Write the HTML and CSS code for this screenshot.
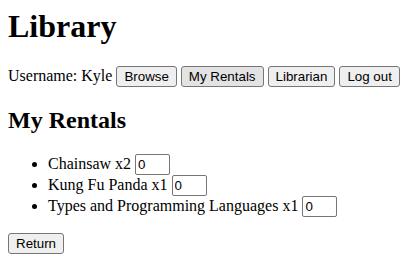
FILE: index.html
```html
<!DOCTYPE html>
<html lang="en">
<head>
    <meta charset="UTF-8">
    <title>Library</title>
    <link rel="stylesheet" href="styles.css">
</head>
<body>
    <h1>Library</h1>
    <div class="nav">
        Username: Kyle
        <button>Browse</button>
        <button class="current">My Rentals</button>
        <button>Librarian</button>
        <button>Log out</button>
    </div>

    <h2>My Rentals</h2>
    <ul class="rentals">
        <li>Chainsaw x2 <input type="number" class="qty" value="0" min="0"></li>
        <li>Kung Fu Panda x1 <input type="number" class="qty" value="0" min="0"></li>
        <li>Types and Programming Languages x1 <input type="number" class="qty" value="0" min="0"></li>
    </ul>
    <button>Return</button>
</body>
</html>
```

FILE: styles.css
```css
body {
    font-family: "Liberation Serif", "Times New Roman", serif;
    font-size: 16px;
    color: #000;
    background: #fff;
    margin: 8px;
}
h1 {
    margin-top: 0;
}
button, input {
    font-family: "Liberation Sans", Arial, sans-serif;
    font-size: 13.33px;
}
button {
    background: #efefef;
    border: 1px solid #767676;
    border-radius: 3px;
    padding: 2px 7px;
}
button.current {
    background: #e3e3e3;
}
.qty {
    width: 29px;
    padding: 2px 2px;
    border: 1px solid #767676;
    border-radius: 2px;
}
```
